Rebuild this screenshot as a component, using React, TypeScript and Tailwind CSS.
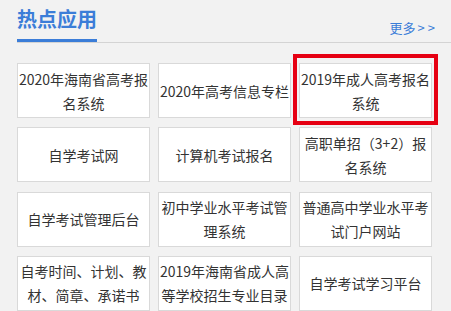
const APPS = [
  "2020年海南省高考报名系统",
  "2020年高考信息专栏",
  "2019年成人高考报名系统",
  "自学考试网",
  "计算机考试报名",
  "高职单招（3+2）报名系统",
  "自学考试管理后台",
  "初中学业水平考试管理系统",
  "普通高中学业水平考试门户网站",
  "自考时间、计划、教材、简章、承诺书",
  "2019年海南省成人高等学校招生专业目录",
  "自学考试学习平台",
];

export default function App() {
  return (
    <div className="relative w-[451px] h-[311px] overflow-hidden bg-[#f2f2f2] font-['Noto_Sans_CJK_SC',sans-serif]">
      {/* Header */}
      <div className="ml-[17px] flex items-end justify-between border-b border-[#d4d4d4]">
        <div className="w-[80px] pt-[5px] pb-[6px] border-b-[3px] border-[#3b7dd8] text-[20px] leading-[28px] font-bold text-[#3b7dd8]">
          热点应用
        </div>
        <a className="mr-[13px] mb-[4px] text-[13px] leading-[20px] text-[#3b7dd8]">
          更多<span className="ml-[2px] tracking-[3px]">&gt;&gt;</span>
        </a>
      </div>

      {/* Grid */}
      <div className="ml-[17px] mt-[20px] grid grid-cols-[133px_133px_133px] gap-x-[8px] gap-y-[9.33px]">
        {APPS.map((name) => (
          <div
            key={name}
            className="h-[55px] flex items-center justify-center border border-[#d9d9d9] bg-white text-center text-[14px] leading-[24px] text-[#333]"
          >
            <span className="w-[133px] shrink-0">{name}</span>
          </div>
        ))}
      </div>

      {/* highlight */}
      <div className="absolute left-[293px] top-[54px] w-[145px] h-[71px] border-4 border-[#e60012]" />
    </div>
  );
}
